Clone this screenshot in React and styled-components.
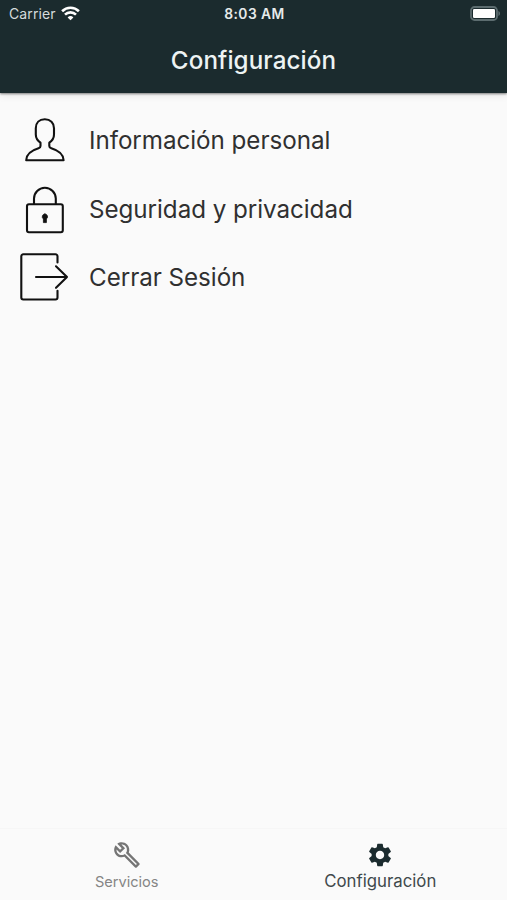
import React from 'react';
import styled, { createGlobalStyle } from 'styled-components';
import { MdOutlineBuild, MdSettings } from 'react-icons/md';

const GlobalStyle = createGlobalStyle`
    body {
        margin: 0;
        background-color: #fafafa;
        font-family: Inter, "Liberation Sans", sans-serif;
    }
`
const Screen = styled.div`
    display: flex;
    flex-direction: column;
    height: 100vh;
    overflow: hidden;
`
const Header = styled.header`
    height: 93px;
    flex-shrink: 0;
    background-color: #1b2b2e;
    box-shadow: 0 1px 2px rgba(0,0,0,0.45), 0 2px 8px rgba(0,0,0,0.1);
`
const StatusBar = styled.div`
    display: grid;
    grid-template-columns: 1fr auto 1fr;
    align-items: center;
    height: 27px;
    padding: 0 7px 0 9px;
`
const Carrier = styled.div`
    display: flex;
    align-items: center;
    gap: 5px;
    font-size: 14px;
    letter-spacing: 0.1px;
    color: #d5dbdc;
`
const Clock = styled.div`
    font-size: 13.8px;
    font-weight: 600;
    letter-spacing: 0.45px;
    color: #e6eaea;
`
const Battery = styled.svg`
    justify-self: end;
    display: block;
`
const Title = styled.h1`
    margin: 0;
    font-size: 24.2px;
    font-weight: 500;
    line-height: 68px;
    letter-spacing: 0.1px;
    text-align: center;
    color: #edf3f3;
`
const Options = styled.ul`
    flex: 1;
    margin: 0;
    padding: 13px 0 0 20px;
    list-style: none;
`
const Option = styled.li`
    display: flex;
    align-items: center;
    height: 68.4px;
    cursor: pointer;
`
const OptionIcon = styled.svg`
    width: 50px;
    height: 50px;
    flex-shrink: 0;
    fill: none;
    stroke: #111;
    stroke-width: 2.1;
    stroke-linejoin: round;
    stroke-linecap: round;
`
const OptionText = styled.span`
    margin-left: 19px;
    padding-top: 1px;
    font-size: 24.2px;
    letter-spacing: -0.04px;
    color: #303030;
    white-space: nowrap;
`
const TabBar = styled.nav`
    display: grid;
    grid-template-columns: 1fr 1fr;
    height: 71px;
    flex-shrink: 0;
    border-top: 1px solid #f6f6f6;
`
const Tab = styled.div`
    display: flex;
    flex-direction: column;
    align-items: center;
    padding-top: 12px;
    color: ${props => props.$active ? '#1b2b2e' : '#757575'};
    cursor: pointer;
`
const TabLabel = styled.span`
    margin-top: ${props => props.$active ? '2px' : '3px'};
    font-size: ${props => props.$active ? '16.8px' : '14.6px'};
    line-height: 21px;
    letter-spacing: 0;
    color: ${props => props.$active ? '#40494c' : '#858585'};
`

const PersonIcon = () => (
    <OptionIcon viewBox="0 0 50 50">
        <path d="M24.8 4.2c-5.6 0-9 3.5-9 9v6.3c0 3.5 1.8 6.2 4.7 8.2v3.2c0 1.3-.7 2-2 2.4-6.8 2-12 5-12.3 12h37.4c-.3-7-5.5-10-12.3-12-1.3-.4-2-1.1-2-2.4v-3.2c2.9-2 4.7-4.7 4.7-8.2v-6.3c0-5.5-3.6-9-9.2-9z" />
    </OptionIcon>
)

const LockIcon = () => (
    <OptionIcon viewBox="0 0 50 50">
        <rect x="7" y="20.3" width="35.8" height="28" rx="2" />
        <path d="M14 20v-5.4a10.9 10.9 0 0 1 21.8 0V20" />
        <path d="M24.9 30a2.7 2.7 0 0 0-1.5 4.9V38.6h3v-3.7a2.7 2.7 0 0 0-1.5-4.9z" fill="#111" strokeWidth="0.8" />
    </OptionIcon>
)

const LogoutIcon = () => (
    <OptionIcon viewBox="0 0 50 50">
        <path d="M37.5 10.5V4.3a2 2 0 0 0-2-2H3.3a2 2 0 0 0-2 2v41.2a2 2 0 0 0 2 2h32.2a2 2 0 0 0 2-2v-6.7" />
        <path d="M16 25h31M36 14.3L47 25 36 35.8" />
    </OptionIcon>
)

const WifiIcon = () => (
    <svg width="19" height="15" viewBox="0 0 19 15" fill="none" stroke="#fff" strokeWidth="2.6">
        <path d="M1.1 5.2a12 12 0 0 1 16.8 0" />
        <path d="M4 8.6a7.8 7.8 0 0 1 11 0" />
        <path d="M9.5 14.3L6.6 11.4a4.2 4.2 0 0 1 5.8 0z" fill="#fff" stroke="none" />
    </svg>
)

const BatteryIcon = () => (
    <Battery width="30" height="15" viewBox="0 0 30 15">
        <rect x="1" y="1" width="26" height="13" rx="3.5" fill="none" stroke="#5c6c6f" strokeWidth="1.8" />
        <rect x="3" y="3" width="22" height="9" rx="1.2" fill="#fff" />
        <path d="M28.4 5c1.2.4 1.6 1.4 1.6 2.5s-.4 2.1-1.6 2.5z" fill="#5c6c6f" />
    </Battery>
)

const options = [
    { text: 'Información personal', icon: PersonIcon },
    { text: 'Seguridad y privacidad', icon: LockIcon },
    { text: 'Cerrar Sesión', icon: LogoutIcon },
]

const App = () => (
    <Screen>
        <GlobalStyle />
        <Header>
            <StatusBar>
                <Carrier>Carrier <WifiIcon /></Carrier>
                <Clock>8:03 AM</Clock>
                <BatteryIcon />
            </StatusBar>
            <Title>Configuración</Title>
        </Header>
        <Options>
            {options.map(({ text, icon: Icon }) => (
                <Option key={text}>
                    <Icon />
                    <OptionText>{text}</OptionText>
                </Option>
            ))}
        </Options>
        <TabBar>
            <Tab>
                <MdOutlineBuild size={28} />
                <TabLabel>Servicios</TabLabel>
            </Tab>
            <Tab $active>
                <MdSettings size={28} />
                <TabLabel $active>Configuración</TabLabel>
            </Tab>
        </TabBar>
    </Screen>
)

export default App;
